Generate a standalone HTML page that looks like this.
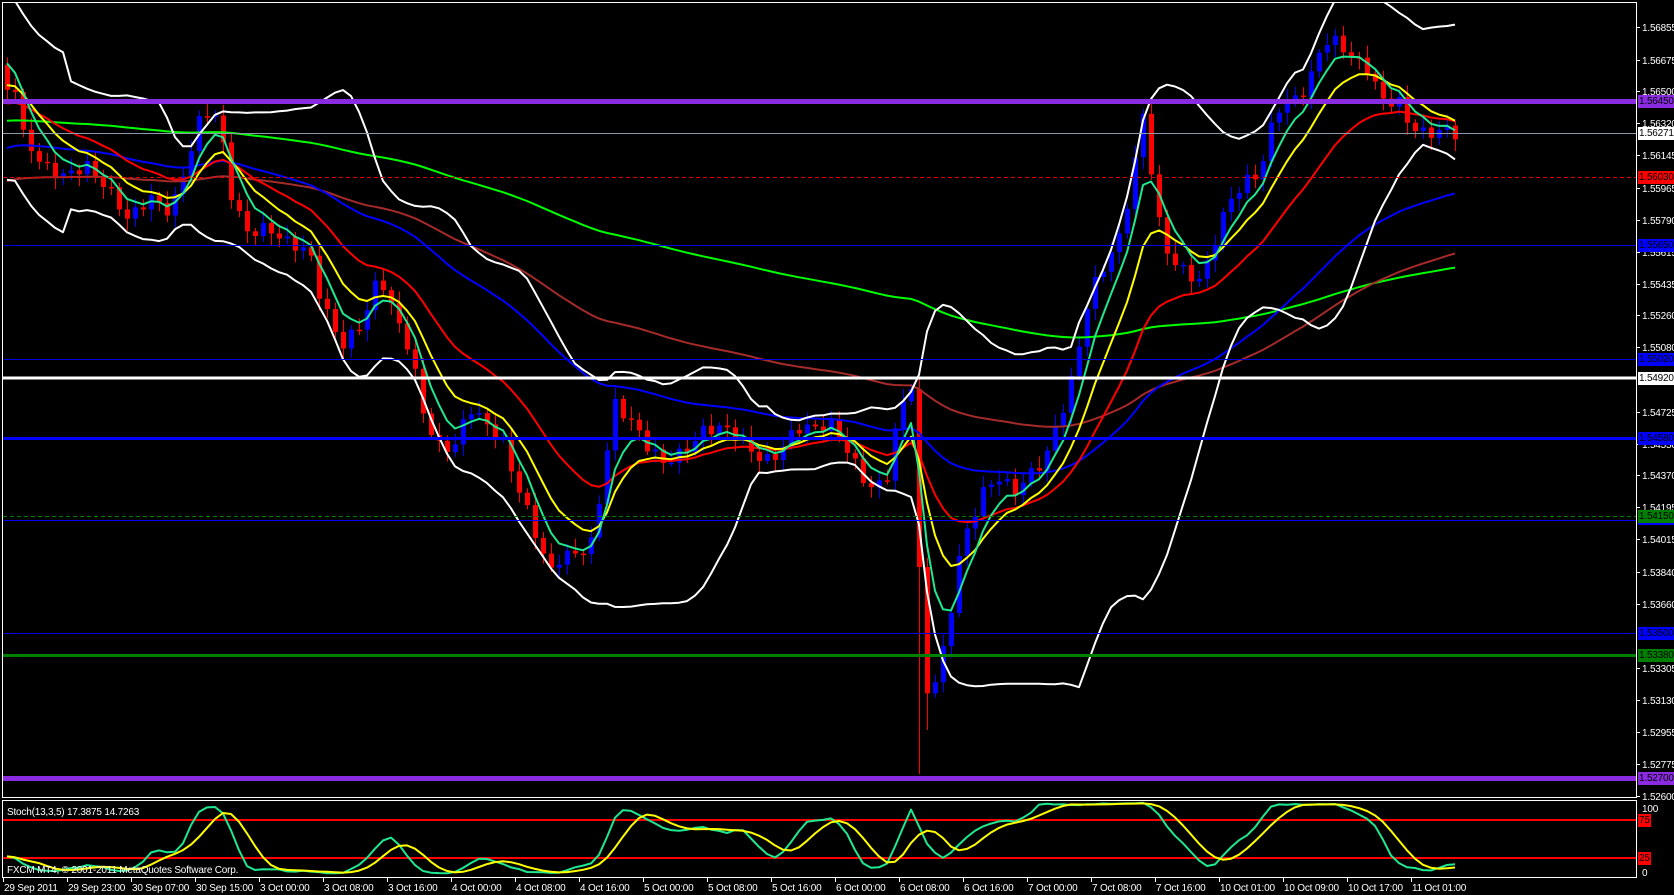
<!DOCTYPE html>
<html><head><meta charset="utf-8">
<style>
html,body{margin:0;padding:0;background:#000;}
body{width:1674px;height:895px;overflow:hidden;position:relative;font-family:"Liberation Sans",sans-serif;}
svg{position:absolute;left:0;top:0;}
.t{font-family:"Liberation Sans",sans-serif;font-size:10px;fill:#fff;letter-spacing:-0.2px;}
.tag{position:absolute;left:1638px;width:36px;height:13px;font-size:10px;line-height:13px;color:#000;font-family:"Liberation Sans",sans-serif;overflow:hidden;white-space:nowrap;padding-left:1px;box-sizing:border-box;letter-spacing:-0.2px;}
</style></head><body>
<svg id="chart" width="1674" height="895" viewBox="0 0 1674 895" xmlns="http://www.w3.org/2000/svg">
<defs>
<clipPath id="cm"><rect x="3" y="3" width="1633" height="794"/></clipPath>
<clipPath id="cs"><rect x="3" y="801" width="1633" height="77"/></clipPath>
</defs>
<g id="main" clip-path="url(#cm)"></g>
<g id="hl" clip-path="url(#cm)">
<line x1="3" x2="1636" y1="133.5" y2="133.5" stroke="#8a9aa8" stroke-width="1"/>
<line x1="3" x2="1636" y1="177.5" y2="177.5" stroke="#e00000" stroke-width="1" stroke-dasharray="4,3"/>
<line x1="3" x2="1636" y1="245.5" y2="245.5" stroke="#0000e0" stroke-width="1"/>
<line x1="3" x2="1636" y1="359.5" y2="359.5" stroke="#0000e0" stroke-width="1"/>
<line x1="3" x2="1636" y1="378" y2="378" stroke="#fff" stroke-width="3"/>
<line x1="3" x2="1636" y1="438.5" y2="438.5" stroke="#0000ff" stroke-width="3"/>
<line x1="3" x2="1636" y1="516.5" y2="516.5" stroke="#008000" stroke-width="1" stroke-dasharray="4,3"/>
<line x1="3" x2="1636" y1="520.5" y2="520.5" stroke="#0000ff" stroke-width="1"/>
<line x1="3" x2="1636" y1="633.5" y2="633.5" stroke="#0000e0" stroke-width="1"/>
<line x1="3" x2="1636" y1="655.5" y2="655.5" stroke="#008000" stroke-width="3"/>
<line x1="3" x2="1636" y1="101.5" y2="101.5" stroke="#8a2be2" stroke-width="5"/>
<line x1="3" x2="1636" y1="778.5" y2="778.5" stroke="#8a2be2" stroke-width="5"/>
</g>
<g id="stoch" clip-path="url(#cs)">
<line x1="3" x2="1636" y1="820" y2="820" stroke="#ff0000" stroke-width="2"/>
<line x1="3" x2="1636" y1="858" y2="858" stroke="#ff0000" stroke-width="2"/>
</g>
<rect x="2.5" y="2.5" width="1634" height="795" fill="none" stroke="#fff" stroke-width="1"/>
<rect x="2.5" y="800.5" width="1634" height="77" fill="none" stroke="#fff" stroke-width="1"/>
<g id="ticks" stroke="#fff" stroke-width="1"></g>
<text class="t" x="7" y="815">Stoch(13,3,5) 17.3875 14.7263</text>
<text class="t" x="7" y="873">FXCM MT4, © 2001-2011 MetaQuotes Software Corp.</text>
<g class="t">
<text x="1642" y="31">1.56855</text>
<text x="1642" y="64">1.56675</text>
<text x="1642" y="95">1.56500</text>
<text x="1642" y="127">1.56320</text>
<text x="1642" y="159">1.56145</text>
<text x="1642" y="192">1.55965</text>
<text x="1642" y="224">1.55790</text>
<text x="1642" y="256">1.55615</text>
<text x="1642" y="288">1.55435</text>
<text x="1642" y="319">1.55260</text>
<text x="1642" y="351">1.55080</text>
<text x="1642" y="416">1.54725</text>
<text x="1642" y="448">1.54550</text>
<text x="1642" y="479">1.54370</text>
<text x="1642" y="511">1.54195</text>
<text x="1642" y="543">1.54015</text>
<text x="1642" y="576">1.53840</text>
<text x="1642" y="608">1.53660</text>
<text x="1642" y="672">1.53305</text>
<text x="1642" y="704">1.53130</text>
<text x="1642" y="736">1.52955</text>
<text x="1642" y="768">1.52775</text>
<text x="1642" y="800">1.52600</text>
<text x="1642" y="812">100</text>
<text x="1642" y="876">0</text>
</g>
<g class="t" id="times">
<text x="4" y="891">29 Sep 2011</text>
<text x="68" y="891">29 Sep 23:00</text>
<text x="132" y="891">30 Sep 07:00</text>
<text x="196" y="891">30 Sep 15:00</text>
<text x="260" y="891">3 Oct 00:00</text>
<text x="324" y="891">3 Oct 08:00</text>
<text x="388" y="891">3 Oct 16:00</text>
<text x="452" y="891">4 Oct 00:00</text>
<text x="516" y="891">4 Oct 08:00</text>
<text x="580" y="891">4 Oct 16:00</text>
<text x="644" y="891">5 Oct 00:00</text>
<text x="708" y="891">5 Oct 08:00</text>
<text x="772" y="891">5 Oct 16:00</text>
<text x="836" y="891">6 Oct 00:00</text>
<text x="900" y="891">6 Oct 08:00</text>
<text x="964" y="891">6 Oct 16:00</text>
<text x="1028" y="891">7 Oct 00:00</text>
<text x="1092" y="891">7 Oct 08:00</text>
<text x="1156" y="891">7 Oct 16:00</text>
<text x="1220" y="891">10 Oct 01:00</text>
<text x="1284" y="891">10 Oct 09:00</text>
<text x="1348" y="891">10 Oct 17:00</text>
<text x="1412" y="891">11 Oct 01:00</text>
</g>
</svg>
<div class="tag" style="top:95px;background:#8a2be2;">1.56450</div>
<div class="tag" style="top:127px;background:#fff;">1.56271</div>
<div class="tag" style="top:171px;background:#ff0000;">1.56030</div>
<div class="tag" style="top:239px;background:#0000ff;">1.55650</div>
<div class="tag" style="top:353px;background:#0000ff;">1.55020</div>
<div class="tag" style="top:372px;background:#fff;">1.54920</div>
<div class="tag" style="top:432px;background:#0000ff;">1.54580</div>
<div class="tag" style="top:514px;background:#0000ff;height:11px;"></div>
<div class="tag" style="top:510px;background:#008000;">1.54150</div>
<div class="tag" style="top:627px;background:#0000ff;">1.53500</div>
<div class="tag" style="top:649px;background:#008000;">1.53380</div>
<div class="tag" style="top:772px;background:#8a2be2;">1.52700</div>
<div class="tag" style="top:814px;background:#ff0000;width:13px;">75</div>
<div class="tag" style="top:852px;background:#ff0000;width:13px;">25</div>
<script>
(function(){
var NS="http://www.w3.org/2000/svg",S=1.0676;
function el(t,a,p){var e=document.createElementNS(NS,t);for(var k in a)e.setAttribute(k,a[k]);p.appendChild(e);return e;}
var kp=[[5,95],[10,50],[20,125],[40,160],[60,165],[80,150],[100,175],[120,210],[140,185],[160,195],[175,150],[190,105],[205,115],[215,180],[230,215],[250,210],[270,230],[290,240],[300,280],[320,320],[340,300],[355,260],[370,300],[385,330],[395,380],[410,415],[425,420],[440,385],[455,400],[470,410],[480,440],[490,465],[505,510],[515,540],[525,525],[540,520],[555,505],[565,440],[575,375],[590,395],[605,420],[620,435],[640,420],[660,400],[680,405],[700,420],[715,430],[730,420],[745,400],[760,405],[780,400],[800,430],[815,455],[830,450],[840,400],[850,365],[857,362],[863,640],[872,650],[885,600],[900,510],[920,465],[935,450],[950,460],[965,440],[980,425],[990,395],[1000,375],[1010,330],[1020,280],[1030,255],[1050,215],[1065,140],[1072,100],[1082,200],[1095,245],[1110,255],[1125,260],[1135,230],[1150,190],[1165,175],[1180,165],[1195,100],[1210,90],[1225,80],[1235,50],[1245,40],[1255,45],[1265,55],[1280,60],[1295,90],[1310,95],[1320,120],[1335,130],[1345,125],[1355,120],[1363,122]];
function interp(x){if(x<=kp[0][0])return kp[0][1];for(var j=1;j<kp.length;j++){if(x<=kp[j][0]){var a=kp[j-1],b=kp[j];return a[1]+(b[1]-a[1])*(x-a[0])/(b[0]-a[0]);}}return kp[kp.length-1][1];}
var N=182,X=[],C=[],O=[],H=[],L=[];
for(var i=0;i<N;i++){var x=7+8*i;X.push(x);var n=6*Math.sin(i*2.3)+4*Math.sin(i*5.7+1);C.push(interp(x/S)*S+n);}
for(i=0;i<N;i++){var o=i?C[i-1]:C[i]-25;O.push(o);var w1=3+Math.abs(9*Math.sin(i*1.3+0.5)),w2=3+Math.abs(9*Math.cos(i*2.1));H.push(Math.min(o,C[i])-w1);L.push(Math.max(o,C[i])+w2);}
var sp=Math.round((863*S-7)/8);L[sp]=774;L[sp+1]=Math.max(L[sp+1],730);
var g=document.getElementById("main");
for(i=0;i<N;i++){var up=C[i]<O[i],col=up?"#0000ff":"#ff0000";
el("line",{x1:X[i]+0.5,x2:X[i]+0.5,y1:H[i],y2:L[i],stroke:col,"stroke-width":1},g);
var t=Math.min(O[i],C[i]),h=Math.max(1.5,Math.abs(O[i]-C[i]));
el("rect",{x:X[i]-2,y:t,width:5,height:h,fill:col},g);}
function ema(p,init){var a=2/(p+1),v=init,r=[];for(var i=0;i<N;i++){v=v+a*(C[i]-v);r.push(v);}return r;}
function poly(arr,col,w,par){var s="";for(var i=0;i<arr.length;i++)s+=X[i]+","+arr[i].toFixed(1)+" ";el("polyline",{points:s,fill:"none",stroke:col,"stroke-width":w||2,"stroke-linejoin":"round"},par||g);}
var up=[],lo=[];
for(i=0;i<N;i++){var s0=Math.max(0,i-19),m=0,c=0;for(var j=s0;j<=i;j++){m+=C[j];c++;}m/=c;var v=0;for(j=s0;j<=i;j++)v+=(C[j]-m)*(C[j]-m);var sd=Math.sqrt(v/c);if(i<8)sd=Math.max(sd,45);up.push(m-2*sd);lo.push(m+2*sd);}
poly(ema(200,121),"#00ff00");
poly(ema(100,183),"#a52a2a");
poly(ema(55,150),"#0000ff");
poly(up,"#ffffff");poly(lo,"#ffffff");
poly(ema(21,105),"#ff0000");
poly(ema(10,84),"#ffff00");
poly(ema(5,50),"#20e890");
var K=[],D=[],num=[],den=[];
for(i=0;i<N;i++){var s1=Math.max(0,i-12),ll=-1e9,hh=1e9;for(j=s1;j<=i;j++){ll=Math.max(ll,L[j]);hh=Math.min(hh,H[j]);}num.push(ll-C[i]);den.push(ll-hh);}
for(i=0;i<N;i++){var a=0,b=0;for(j=Math.max(0,i-2);j<=i;j++){a+=num[j];b+=den[j];}K.push(b?100*a/b:50);}
for(i=0;i<N;i++){var s2=0,c2=0;for(j=Math.max(0,i-4);j<=i;j++){s2+=K[j];c2++;}D.push(s2/c2);}
var sg=document.getElementById("stoch");
function ys(v){return 877-0.76*v;}
poly(K.map(ys),"#20e890",2,sg);poly(D.map(ys),"#ffff00",2,sg);
var tk=document.getElementById("ticks");
var ty=[27,60,91,123,155,188,220,252,284,315,347,412,444,475,507,539,572,604,668,700,732,764,796];
ty.forEach(function(y){el("line",{x1:1637,x2:1640,y1:y+0.5,y2:y+0.5},tk);});
for(i=0;i<23;i++){var xx=3+64*i+0.5;el("line",{x1:xx,x2:xx,y1:878,y2:882},tk);}
})();
</script>
</body></html>
